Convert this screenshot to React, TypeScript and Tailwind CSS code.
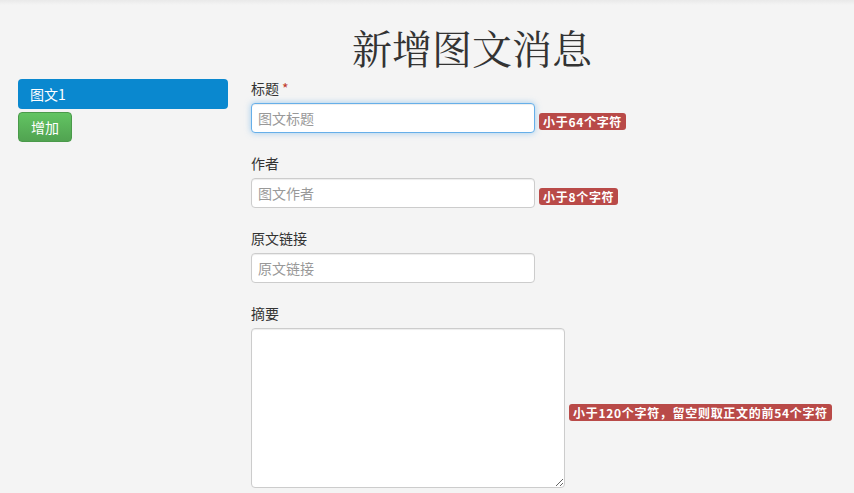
import React from "react";

const sans = { fontFamily: '"Noto Sans CJK SC", "Noto Sans", sans-serif' };

function Badge({ children }: { children: React.ReactNode }) {
  return (
    <span className="ml-[4px] inline-block h-[17px] rounded-[3px] bg-[#b94a48] px-[4px] text-[12px] font-bold leading-[17px] tracking-[0.7px] text-white whitespace-nowrap">
      {children}
    </span>
  );
}

export default function App() {
  return (
    <div className="min-h-[493px] w-full bg-[#f4f4f4] text-[#333]" style={sans}>
      <div className="h-[5px] bg-gradient-to-b from-[#e9e9e9] to-[#f4f4f4]" />
      <div className="ml-[251px] w-[442px] pt-[14px] text-center">
        <h1
          className="text-[40px] leading-[56px] text-[#333]"
          style={{ fontFamily: '"Noto Serif CJK SC", "SimSun", serif' }}
        >
          新增图文消息
        </h1>
      </div>
      <div className="mt-[4px] flex">
        <div className="ml-[18px] flex w-[210px] flex-col gap-[3px]">
          <div className="h-[30px] rounded-[4px] bg-[#0a88cf] px-[12px] text-[14px] leading-[30px] text-white">
            图文1
          </div>
          <button className="h-[30px] w-[54px] rounded-[4px] border border-[#4a9a4a] bg-gradient-to-b from-[#62c462] to-[#51a351] text-[14px] leading-[28px] text-white">
            增加
          </button>
        </div>
        <div className="ml-[23px] flex flex-col">
          <div className="h-[20px] text-[14px] leading-[18px]">
            标题<span className="ml-[3px] text-[#c0392b]">*</span>
          </div>
          <div className="mt-[4px] flex items-end">
            <input
              className="h-[30px] w-[284px] rounded-[4px] border border-[#66afe9] bg-white px-[6px] text-[14px] shadow-[inset_0_1px_1px_rgba(0,0,0,0.075),0_0_6px_rgba(102,175,233,0.6)] outline-none placeholder:text-[#999]"
              placeholder="图文标题"
            />
            <span className="mb-[1px]">
              <Badge>小于64个字符</Badge>
            </span>
          </div>

          <div className="mt-[21px] h-[20px] text-[14px] leading-[18px]">作者</div>
          <div className="mt-[4px] flex items-end">
            <input
              className="h-[30px] w-[284px] rounded-[4px] border border-[#ccc] bg-white px-[6px] text-[14px] shadow-[inset_0_1px_1px_rgba(0,0,0,0.075)] outline-none placeholder:text-[#999]"
              placeholder="图文作者"
            />
            <span className="mb-[1px]">
              <Badge>小于8个字符</Badge>
            </span>
          </div>

          <div className="mt-[21px] h-[20px] text-[14px] leading-[18px]">原文链接</div>
          <div className="mt-[4px] flex items-end">
            <input
              className="h-[30px] w-[284px] rounded-[4px] border border-[#ccc] bg-white px-[6px] text-[14px] shadow-[inset_0_1px_1px_rgba(0,0,0,0.075)] outline-none placeholder:text-[#999]"
              placeholder="原文链接"
            />
          </div>

          <div className="mt-[21px] h-[20px] text-[14px] leading-[18px]">摘要</div>
          <div className="mt-[4px] flex items-start">
            <textarea className="h-[160px] w-[314px] rounded-[4px] border border-[#ccc] bg-white shadow-[inset_0_1px_1px_rgba(0,0,0,0.075)] outline-none" />
            <span className="mt-[71px]">
              <Badge>小于120个字符，留空则取正文的前54个字符</Badge>
            </span>
          </div>
        </div>
      </div>
    </div>
  );
}
